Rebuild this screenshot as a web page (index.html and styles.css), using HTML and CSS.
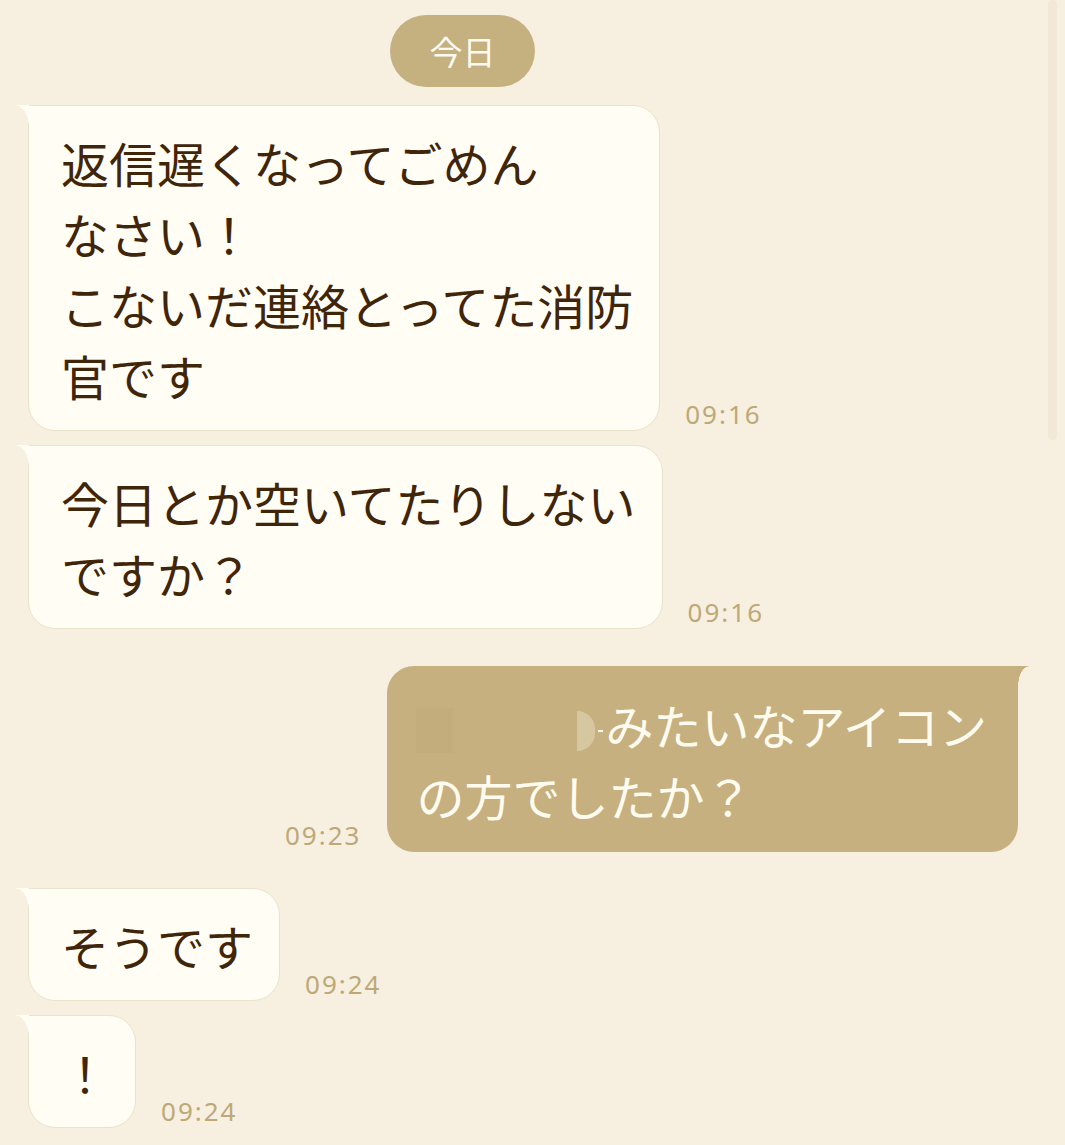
FILE: index.html
```html
<!DOCTYPE html>
<html lang="ja">
<head>
    <meta charset="UTF-8">
    <meta name="viewport" content="width=device-width, initial-scale=1.0">
    <title>トーク</title>
    <link rel="stylesheet" href="styles.css">
</head>
<body>
    <div class="chat">
        <!-- Date separator -->
        <div class="date-row">
            <span class="date-pill">今日</span>
        </div>

        <div class="msg msg-in">
            <div class="bubble">返信遅くなってごめん<br>なさい！<br>こないだ連絡とってた消防<br>官です</div>
            <span class="time">09:16</span>
        </div>

        <div class="msg msg-in">
            <div class="bubble">今日とか空いてたりしない<br>ですか？</div>
            <span class="time">09:16</span>
        </div>

        <div class="msg msg-out group-start">
            <span class="time">09:23</span>
            <div class="bubble"><span class="redacted"><span class="redact-box"></span><span class="redact-edge"></span><span class="redact-dash"></span></span>みたいなアイコン<br>の方でしたか？</div>
        </div>

        <div class="msg msg-in group-start">
            <div class="bubble">そうです</div>
            <span class="time">09:24</span>
        </div>

        <div class="msg msg-in">
            <div class="bubble">！</div>
            <span class="time">09:24</span>
        </div>
    </div>

    <!-- Scroll indicator -->
    <div class="scroll-thumb"></div>
</body>
</html>
```

FILE: styles.css
```css
body {
    margin: 0;
    padding: 0;
    background-color: #f7f0e1;
    font-family: "Noto Sans CJK JP", "Noto Sans", sans-serif;
    min-height: 1145px;
    overflow: hidden;
}
.chat {
    display: flex;
    flex-direction: column;
    padding-top: 15px;
}
.date-row {
    display: flex;
    justify-content: center;
    padding-right: 140px;
    margin-bottom: 18px;
}
.date-pill {
    display: inline-flex;
    align-items: center;
    justify-content: center;
    width: 145px;
    height: 72px;
    border-radius: 36px;
    background-color: #c5b07f;
    color: #fffaf0;
    font-size: 33px;
}
.msg {
    display: flex;
    align-items: flex-end;
    gap: 25px;
    margin-top: 14px;
}
.date-row + .msg {
    margin-top: 0;
}
.msg.group-start {
    margin-top: 36px;
}
.msg-out.group-start {
    margin-top: 37px;
}
.msg-in {
    padding-left: 28px;
}
.msg-out {
    justify-content: flex-end;
    padding-right: 47px;
    gap: 26px;
}
.bubble {
    position: relative;
    font-size: 48px;
    line-height: 71px;
    border-radius: 27px;
    white-space: nowrap;
}
.msg-in .bubble {
    background-color: #fffdf4;
    color: #3f2509;
    border: 1px solid #ebe2cc;
    border-top-left-radius: 0;
    padding: 21px 26px 19px 32px;
}
.msg-in .bubble::before {
    content: "";
    position: absolute;
    top: -1px;
    left: -14px;
    width: 14px;
    height: 21px;
    background: radial-gradient(ellipse 14px 21px at 0 100%, transparent 96%, #fffdf4 100%);
}
.msg-out .bubble {
    background-color: #c6b07f;
    color: #fffcef;
    border-top-right-radius: 0;
    padding: 23px 31px 21px 29px;
}
.msg-out .bubble::before {
    content: "";
    position: absolute;
    top: 0;
    right: -11px;
    width: 11px;
    height: 20px;
    background: radial-gradient(ellipse 11px 20px at 100% 100%, transparent 96%, #c6b07f 100%);
}
.time {
    font-family: "Noto Sans", sans-serif;
    font-size: 26px;
    letter-spacing: 2px;
    line-height: 1;
    color: #bda977;
    padding-bottom: 4px;
}
.redacted {
    display: inline-flex;
    align-items: center;
    width: 189px;
    height: 50px;
    vertical-align: -8px;
}
.redact-box {
    width: 37px;
    height: 45px;
    background-color: #c3ad7c;
    margin-right: 124px;
}
.redact-edge {
    width: 18px;
    height: 40px;
    background-color: #d6c7a0;
    border-radius: 0 20px 20px 0;
}
.redact-dash {
    width: 5px;
    height: 2px;
    background-color: #fffcef;
    margin-left: 3px;
}
.scroll-thumb {
    position: fixed;
    top: 0;
    right: 8px;
    width: 9px;
    height: 440px;
    border-radius: 4px;
    background-color: #f1e9d6;
}
```
